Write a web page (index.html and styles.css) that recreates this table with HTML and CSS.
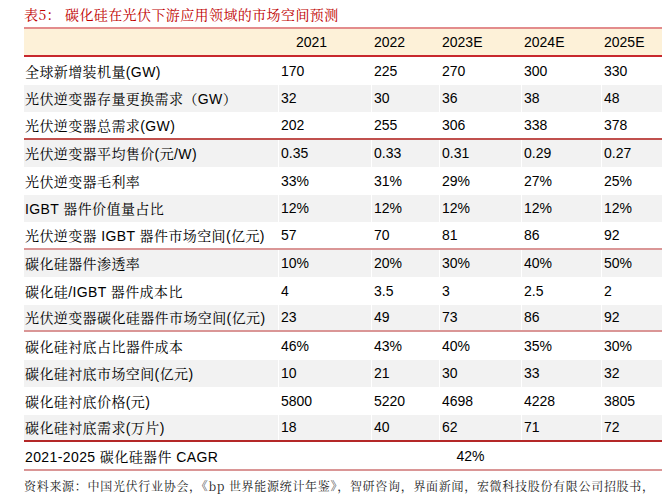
FILE: index.html
```html
<!DOCTYPE html>
<html lang="zh-CN">
<head>
<meta charset="utf-8">
<title>碳化硅在光伏下游应用领域的市场空间预测</title>
<link rel="stylesheet" href="styles.css">
</head>
<body>
<div class="page">
  <div class="title">表5：&nbsp;碳化硅在光伏下游应用领域的市场空间预测</div>
  <div class="table">
    <div class="row head">
      <div class="c lab"></div>
      <div class="c first">2021</div>
      <div class="c">2022</div>
      <div class="c">2023E</div>
      <div class="c">2024E</div>
      <div class="c">2025E</div>
    </div>

    <div class="row"><div class="c lab">全球新增装机量(GW)</div><div class="c">170</div><div class="c">225</div><div class="c">270</div><div class="c">300</div><div class="c">330</div></div>
    <div class="row alt"><div class="c lab">光伏逆变器存量更换需求（GW）</div><div class="c">32</div><div class="c">30</div><div class="c">36</div><div class="c">38</div><div class="c">48</div></div>
    <div class="row end-red"><div class="c lab">光伏逆变器总需求(GW)</div><div class="c">202</div><div class="c">255</div><div class="c">306</div><div class="c">338</div><div class="c">378</div></div>

    <div class="row alt"><div class="c lab">光伏逆变器平均售价(元/W)</div><div class="c">0.35</div><div class="c">0.33</div><div class="c">0.31</div><div class="c">0.29</div><div class="c">0.27</div></div>
    <div class="row"><div class="c lab">光伏逆变器毛利率</div><div class="c">33%</div><div class="c">31%</div><div class="c">29%</div><div class="c">27%</div><div class="c">25%</div></div>
    <div class="row alt"><div class="c lab">IGBT 器件价值量占比</div><div class="c">12%</div><div class="c">12%</div><div class="c">12%</div><div class="c">12%</div><div class="c">12%</div></div>
    <div class="row end-pink"><div class="c lab">光伏逆变器 IGBT 器件市场空间(亿元)</div><div class="c">57</div><div class="c">70</div><div class="c">81</div><div class="c">86</div><div class="c">92</div></div>

    <div class="row alt"><div class="c lab">碳化硅器件渗透率</div><div class="c">10%</div><div class="c">20%</div><div class="c">30%</div><div class="c">40%</div><div class="c">50%</div></div>
    <div class="row"><div class="c lab">碳化硅/IGBT 器件成本比</div><div class="c">4</div><div class="c">3.5</div><div class="c">3</div><div class="c">2.5</div><div class="c">2</div></div>
    <div class="row alt end-pink"><div class="c lab">光伏逆变器碳化硅器件市场空间(亿元)</div><div class="c">23</div><div class="c">49</div><div class="c">73</div><div class="c">86</div><div class="c">92</div></div>

    <div class="row"><div class="c lab">碳化硅衬底占比器件成本</div><div class="c">46%</div><div class="c">43%</div><div class="c">40%</div><div class="c">35%</div><div class="c">30%</div></div>
    <div class="row alt"><div class="c lab">碳化硅衬底市场空间(亿元)</div><div class="c">10</div><div class="c">21</div><div class="c">30</div><div class="c">33</div><div class="c">32</div></div>
    <div class="row"><div class="c lab">碳化硅衬底价格(元)</div><div class="c">5800</div><div class="c">5220</div><div class="c">4698</div><div class="c">4228</div><div class="c">3805</div></div>
    <div class="row alt end-dark"><div class="c lab">碳化硅衬底需求(万片)</div><div class="c">18</div><div class="c">40</div><div class="c">62</div><div class="c">71</div><div class="c">72</div></div>

    <div class="row cagr end-pink"><div class="c lab">2021-2025 碳化硅器件 CAGR</div><div class="c span">42%</div></div>
  </div>
  <div class="source">资料来源：中国光伏行业协会，《bp 世界能源统计年鉴》，智研咨询，界面新闻，宏微科技股份有限公司招股书，</div>
</div>
</body>
</html>
```

FILE: styles.css
```css
html, body {
  margin: 0;
  padding: 0;
  background: #fff;
}

.page {
  padding-left: 24px;
  width: 638px;
  font-family: "Liberation Sans", "Noto Serif CJK SC", serif;
  color: #000;
}

.title {
  height: 27px;
  line-height: 28px;
  font-family: "Noto Serif CJK SC", "Liberation Serif", serif;
  font-size: 14px;
  letter-spacing: 0.4px;
  color: #c00000;
  white-space: nowrap;
}

.table {
  display: flex;
  flex-direction: column;
  width: 638px;
}

.row {
  display: grid;
  grid-template-columns: 254px 92px 67px 81px 79px 60px;
  column-gap: 1px;
  height: 27.5px;
  box-sizing: border-box;
  font-size: 14px;
}

.row.head {
  height: 30px;
  background: #fdf1d8;
  border-top: 2px solid #e38c8c;
  border-bottom: 2px solid #c8282d;
}

.c {
  display: flex;
  align-items: center;
  padding-left: 2px;
  white-space: nowrap;
}

.c.lab {
  padding-left: 1px;
  letter-spacing: 0.4px;
}

.c.first {
  padding-left: 17px;
}

.row.alt .c {
  background: #f2f2f2;
}

.row.end-red {
  border-bottom: 2px solid #c0504d;
}

.row.end-pink {
  border-bottom: 2px solid #da9696;
}

.row.end-dark {
  border-bottom: 2px solid #b42828;
}

.row.cagr {
  height: 29px;
  grid-template-columns: 254px 383px;
}

.c.span {
  justify-content: center;
  padding-left: 0;
}

.source {
  margin-top: 4px;
  height: 22px;
  line-height: 22px;
  font-family: "Noto Serif CJK SC", "Liberation Serif", serif;
  font-size: 12px;
  letter-spacing: 0.7px;
  color: #222;
  white-space: nowrap;
}
```
